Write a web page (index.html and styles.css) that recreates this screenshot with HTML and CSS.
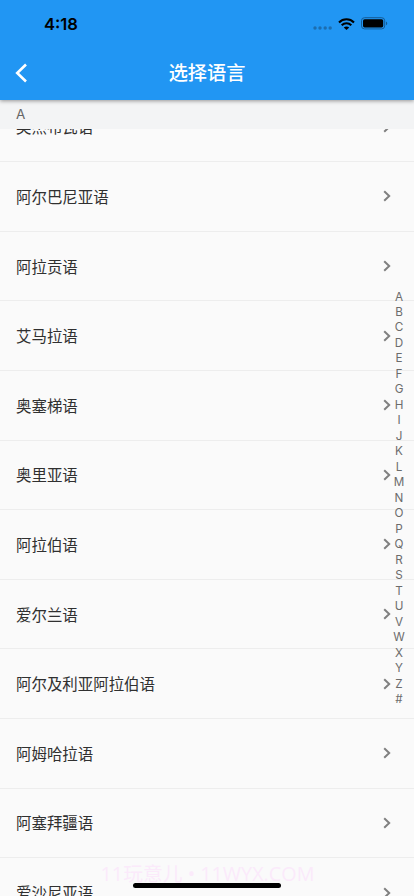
FILE: index.html
```html
<!DOCTYPE html>
<html lang="zh-CN">
<head>
<meta charset="utf-8">
<meta name="viewport" content="width=device-width, initial-scale=1">
<title>选择语言</title>
<link rel="stylesheet" href="styles.css">
</head>
<body>
<svg width="0" height="0" class="defs"><symbol id="chevron" viewBox="0 0 8 12"><path d="M1.2 1.2 6.2 6 1.2 10.8" fill="none" stroke="currentColor" stroke-width="2"/></symbol></svg>
<div class="screen">
  <header class="header">
    <div class="status">
      <span class="time">4:18</span>
      <div class="indicators">
        <svg class="dots" width="19" height="4" viewBox="0 0 19 4"><g fill="#1c6daf"><circle cx="2" cy="2" r="1.7"/><circle cx="7" cy="2" r="1.7"/><circle cx="12.2" cy="2" r="1.7"/><circle cx="17.2" cy="2" r="1.7"/></g></svg>
        <svg class="wifi" width="17" height="12" viewBox="0 0 17 12"><g fill="none" stroke="#000" stroke-width="2.1"><path d="M1 4.4C5.2.2 11.8.2 16 4.4"/><path d="M3.7 7.2c2.7-2.6 6.9-2.6 9.6 0"/></g><path d="M5.8 9.5c1.5-1.4 3.9-1.4 5.4 0L8.5 12z"/></svg>
        <svg class="battery" width="27" height="13" viewBox="0 0 27 13"><rect x=".5" y=".7" width="23.2" height="11.2" rx="3" fill="none" stroke="#145b95"/><rect x="2" y="2.2" width="20.2" height="8.2" rx="1.6"/><path d="M25 4.4c1.7.6 1.7 3.2 0 3.8z" fill="#145b95"/></svg>
      </div>
    </div>
    <nav class="navbar">
      <svg class="back" width="13" height="20" viewBox="0 0 13 20"><path d="M11 1.5 2.2 10 11 18.5" fill="none" stroke="#fff" stroke-width="2.6"/></svg>
      <h1 class="title">选择语言</h1>
    </nav>
  </header>
  <div class="section">A</div>
  <main class="viewport">
    <ul class="list">
      <li class="row"><span>奥杰布瓦语</span><svg class="chevron"><use href="#chevron"/></svg></li>
      <li class="row"><span>阿尔巴尼亚语</span><svg class="chevron"><use href="#chevron"/></svg></li>
      <li class="row"><span>阿拉贡语</span><svg class="chevron"><use href="#chevron"/></svg></li>
      <li class="row"><span>艾马拉语</span><svg class="chevron"><use href="#chevron"/></svg></li>
      <li class="row"><span>奥塞梯语</span><svg class="chevron"><use href="#chevron"/></svg></li>
      <li class="row"><span>奥里亚语</span><svg class="chevron"><use href="#chevron"/></svg></li>
      <li class="row"><span>阿拉伯语</span><svg class="chevron"><use href="#chevron"/></svg></li>
      <li class="row"><span>爱尔兰语</span><svg class="chevron"><use href="#chevron"/></svg></li>
      <li class="row"><span>阿尔及利亚阿拉伯语</span><svg class="chevron"><use href="#chevron"/></svg></li>
      <li class="row"><span>阿姆哈拉语</span><svg class="chevron"><use href="#chevron"/></svg></li>
      <li class="row"><span>阿塞拜疆语</span><svg class="chevron"><use href="#chevron"/></svg></li>
      <li class="row"><span>爱沙尼亚语</span><svg class="chevron"><use href="#chevron"/></svg></li>
    </ul>
  </main>
  <div class="index"><span>A</span><span>B</span><span>C</span><span>D</span><span>E</span><span>F</span><span>G</span><span>H</span><span>I</span><span>J</span><span>K</span><span>L</span><span>M</span><span>N</span><span>O</span><span>P</span><span>Q</span><span>R</span><span>S</span><span>T</span><span>U</span><span>V</span><span>W</span><span>X</span><span>Y</span><span>Z</span><span>#</span></div>
  <div class="watermark">11玩意儿 • 11WYX.COM</div>
  <div class="home"></div>
</div>
</body>
</html>
```
FILE: styles.css
```css
* { box-sizing: border-box; }
body { margin: 0; background: #fafafa; font-family: Inter, "Noto Sans CJK SC", sans-serif; }
.defs { position: absolute; }
.screen { position: relative; display: flex; flex-direction: column; height: 896px; overflow: hidden; }
.header { position: relative; z-index: 2; flex: none; height: 99.5px; background: #2196f3; box-shadow: 0 1px 4px rgba(0, 0, 0, .4); }
.status { display: flex; align-items: center; justify-content: space-between; height: 47px; padding: 0 26px 0 44px; }
.time { font-size: 16.6px; font-weight: 600; line-height: 20px; color: #000; }
.indicators { display: flex; align-items: center; }
.dots { margin: 9px 6px 0 0; }
.wifi { margin-right: 6px; }
.navbar { display: grid; grid-template-columns: 40px 1fr 40px; align-items: center; height: 52px; }
.back { margin-left: 15px; }
.title { margin: 0; text-align: center; color: #fff; font-size: 19.2px; font-weight: 500; line-height: 28px; }
.section { flex: none; height: 29.5px; padding-left: 16px; background: #f3f4f5; color: #666; font-size: 13.5px; line-height: 29px; }
.viewport { flex: 1; min-height: 0; overflow: hidden; }
.list { margin: -36.5px 0 0; padding: 0; list-style: none; }
.row { display: flex; align-items: center; justify-content: space-between; height: 69.62px; padding: 0 23px 0 16px; border-bottom: 1px solid #ededed; color: #303030; font-family: "Noto Sans CJK SC", sans-serif; font-size: 15.45px; line-height: 24px; }
.row span { padding-bottom: 1px; }
.chevron { width: 8px; height: 12px; color: #808080; }
.index { position: absolute; top: 289.5px; right: 5px; width: 20px; display: flex; flex-direction: column; text-align: center; color: #6c6c6c; font-size: 11.7px; line-height: 15.48px; }
.watermark { position: absolute; left: 1px; right: 0; top: 860px; text-align: center; color: #fbeafa; font-family: "Open Sans", "Noto Sans CJK SC", sans-serif; font-size: 19.8px; line-height: 28px; white-space: nowrap; }
.home { position: absolute; left: 133px; bottom: 8px; width: 148px; height: 5px; border-radius: 3px; background: #000; }
```
